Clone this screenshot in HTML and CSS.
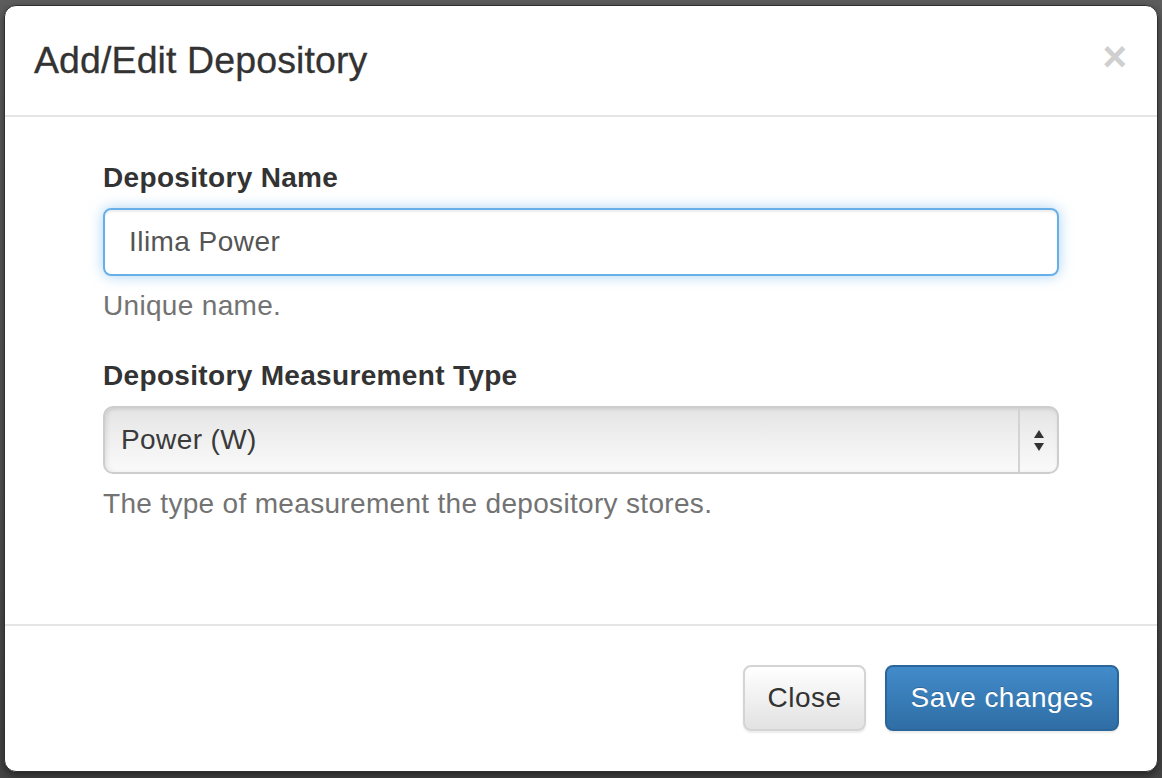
FILE: index.html
```html
<!DOCTYPE html>
<html lang="en">
<head>
<meta charset="utf-8">
<title>Add/Edit Depository</title>
<link rel="stylesheet" href="styles.css">
</head>
<body>
<div class="backdrop">
  <div class="modal">
    <div class="modal-header">
      <h4 class="modal-title">Add/Edit Depository</h4>
      <span class="close">&times;</span>
    </div>
    <div class="modal-body">
      <form class="form">
        <div class="form-group">
          <label class="label">Depository Name</label>
          <div class="input">Ilima Power</div>
          <p class="help">Unique name.</p>
        </div>
        <div class="form-group">
          <label class="label">Depository Measurement Type</label>
          <div class="select">
            <span class="select-value">Power (W)</span>
            <span class="select-arrows">
              <svg width="12" height="24" viewBox="0 0 12 24"><path d="M6 1 L11 9 L1 9 Z" fill="#333"/><path d="M1 14 L11 14 L6 22 Z" fill="#333"/></svg>
            </span>
          </div>
          <p class="help">The type of measurement the depository stores.</p>
        </div>
      </form>
    </div>
    <div class="modal-footer">
      <button class="btn btn-default" type="button">Close</button>
      <button class="btn btn-primary" type="button">Save changes</button>
    </div>
  </div>
</div>
</body>
</html>
```
FILE: styles.css
```css
html, body {
  margin: 0;
  padding: 0;
}
body {
  background: #4f4f4f;
  font-family: "Liberation Sans", Arial, sans-serif;
  color: #333;
}
.backdrop {
  width: 1162px;
  height: 778px;
  padding: 5px 4px 0 4px;
  box-sizing: border-box;
  background: linear-gradient(to bottom, #5d5d5d 0%, #555 60%, #444 100%);
}
.modal {
  width: 1154px;
  box-sizing: border-box;
  background: #fff;
  border: 1px solid #2f2f2f;
  border-radius: 12px;
  box-shadow: 0 3px 9px rgba(0, 0, 0, 0.5);
}
.modal-header {
  display: flex;
  justify-content: space-between;
  align-items: center;
  padding: 29px 30px 30px 29px;
  border-bottom: 2px solid #e5e5e5;
}
.modal-title {
  margin: 0;
  font-size: 37.5px;
  line-height: 50px;
  font-weight: normal;
  color: #333;
  letter-spacing: 0.1px;
  -webkit-text-stroke: 0.3px #333;
}
.close {
  font-size: 42px;
  font-weight: bold;
  line-height: 1;
  color: #cfcfcf;
  margin-top: -6px;
}
.modal-body {
  padding: 41px 40px 40px;
}
.form {
  margin: 0 58px;
}
.form-group {
  margin-bottom: 30px;
}
.label {
  display: block;
  font-size: 28px;
  line-height: 40px;
  font-weight: bold;
  color: #333;
  margin-bottom: 10px;
  letter-spacing: 0.33px;
}
.input {
  height: 68px;
  box-sizing: border-box;
  border: 2px solid #66afe9;
  border-radius: 8px;
  padding: 0 24px;
  font-size: 28px;
  line-height: 64px;
  color: #555;
  letter-spacing: 0.45px;
  box-shadow: inset 0 2px 2px rgba(0, 0, 0, 0.075), 0 0 14px rgba(102, 175, 233, 0.55);
}
.help {
  margin: 10px 0 20px;
  font-size: 28px;
  line-height: 40px;
  color: #737373;
  letter-spacing: 0.32px;
}
.select {
  display: flex;
  height: 68px;
  box-sizing: border-box;
  border: 2px solid #cdcdcd;
  border-radius: 10px;
  background: linear-gradient(to bottom, #e4e4e4 0%, #efefef 45%, #fafafa 100%);
  box-shadow: inset 3px 0 4px rgba(0, 0, 0, 0.06), inset 0 2px 3px rgba(0, 0, 0, 0.06);
}
.select-value {
  flex: 1;
  padding-left: 16px;
  font-size: 28px;
  line-height: 64px;
  color: #3a3a3a;
  letter-spacing: 0.4px;
}
.select-arrows {
  width: 37px;
  display: flex;
  align-items: center;
  justify-content: center;
  border-left: 2px solid #d3d3d3;
  padding-top: 2px;
}
.modal-footer {
  display: flex;
  justify-content: flex-end;
  gap: 19px;
  margin-top: 30px;
  padding: 39px 38px 40px 40px;
  border-top: 2px solid #e5e5e5;
}
.btn {
  height: 66px;
  box-sizing: border-box;
  padding: 0;
  text-align: center;
  white-space: nowrap;
  font-family: "Liberation Sans", Arial, sans-serif;
  font-size: 28px;
  line-height: 62px;
  border-radius: 8px;
  border: 2px solid;
  cursor: pointer;
  letter-spacing: 0.45px;
}
.btn-default {
  color: #333;
  border-color: #d4d4d4;
  background: linear-gradient(to bottom, #ffffff 0%, #e2e2e2 100%);
  box-shadow: 0 2px 2px rgba(0, 0, 0, 0.08);
  width: 123px;
}
.btn-primary {
  color: #fff;
  border-color: #2b669a;
  background: linear-gradient(to bottom, #428bca 0%, #2f6ea5 100%);
  text-shadow: 0 -1px 0 rgba(0, 0, 0, 0.2);
  box-shadow: 0 2px 2px rgba(0, 0, 0, 0.08);
  width: 234px;
}
```
